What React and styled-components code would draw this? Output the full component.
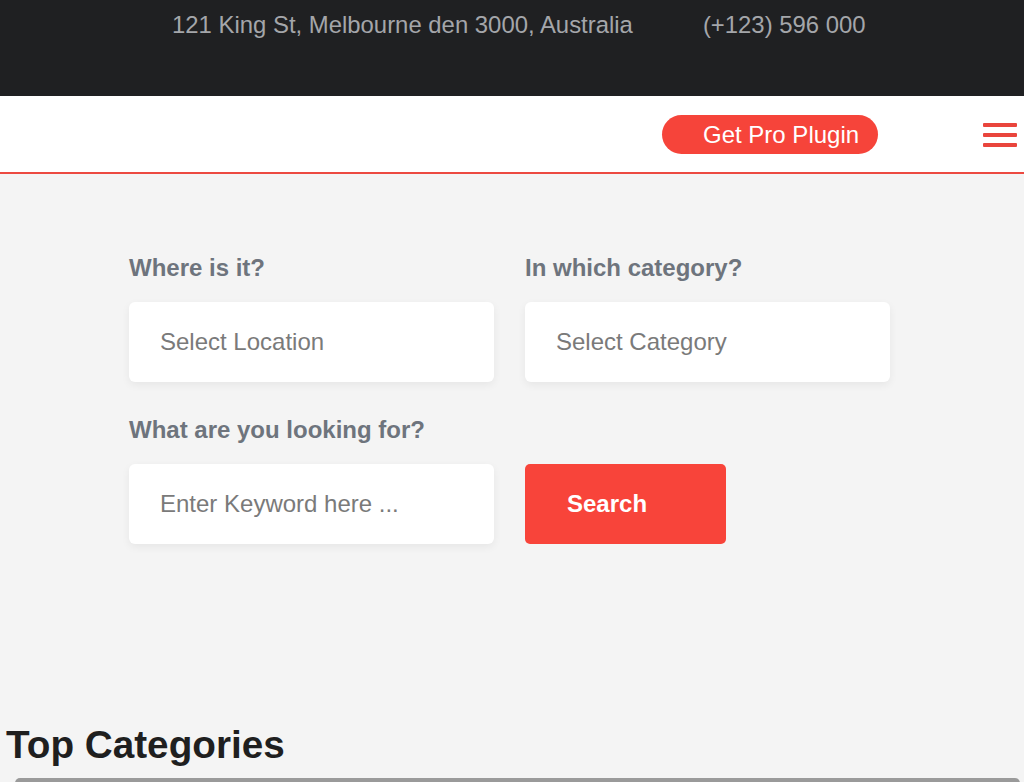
import React from "react";
import styled, { createGlobalStyle } from "styled-components";

const Global = createGlobalStyle`
  html, body { margin: 0; padding: 0; }
  body {
    background: #f4f4f4;
    font-family: "Liberation Sans", Arial, sans-serif;
    overflow: hidden;
  }
  * { box-sizing: border-box; }
`;

const Page = styled.div`
  width: 1024px;
  height: 782px;
  overflow: hidden;
  background: #f4f4f4;
  display: flex;
  flex-direction: column;
`;

const TopBar = styled.div`
  flex-shrink: 0;
  height: 96px;
  background: #1f2022;
  display: flex;
  align-items: flex-start;
  gap: 70px;
  padding: 11px 0 0 172px;
  color: #a4a6aa;
  font-size: 23.9px;
  line-height: 28px;
`;

const Header = styled.header`
  flex-shrink: 0;
  height: 78px;
  background: #fff;
  border-bottom: 2px solid #ec4a41;
  display: flex;
  align-items: flex-start;
  justify-content: flex-end;
  padding: 19px 7px 0 0;
`;

const ProButton = styled.button`
  height: 39px;
  width: 216px;
  border: none;
  border-radius: 20px;
  background: #f6443a;
  color: #fff;
  font-family: "Liberation Sans", Arial, sans-serif;
  font-size: 24px;
  line-height: 39px;
  text-align: left;
  padding: 0 0 0 41px;
  cursor: pointer;
`;

const Burger = styled.div`
  width: 34px;
  margin: 8px 0 0 105px;
  display: flex;
  flex-direction: column;
  gap: 6px;
`;

const BurgerBar = styled.span`
  display: block;
  height: 4px;
  background: #e9453d;
  border-radius: 1px;
`;

const Main = styled.main`
  flex: 1 0 auto;
  padding: 80px 0 0 129px;
`;

const FormGrid = styled.div`
  display: grid;
  grid-template-columns: 365px 365px;
  column-gap: 31px;
  row-gap: 34px;
`;

const Field = styled.div`
  display: flex;
  flex-direction: column;
`;

const Label = styled.label`
  font-size: 24px;
  font-weight: bold;
  line-height: 28px;
  color: #6e747d;
  margin-bottom: 20px;
  height: 28px;
`;

const Box = styled.div`
  height: 80px;
  background: #fff;
  border-radius: 6px;
  box-shadow: 0 3px 8px rgba(0, 0, 0, 0.06);
  display: flex;
  align-items: center;
  padding-left: 31px;
  font-size: 24px;
  color: #7a7a7a;
`;

const SearchButton = styled.button`
  width: 201px;
  height: 80px;
  border: none;
  border-radius: 5px;
  background: #f8443a;
  color: #fff;
  font-family: "Liberation Sans", Arial, sans-serif;
  font-size: 24px;
  font-weight: bold;
  text-align: left;
  padding: 0 0 0 42px;
  cursor: pointer;
`;

const Spacer = styled.div`
  height: 28px;
  margin-bottom: 20px;
`;

const Heading = styled.h2`
  margin: 179px 0 0 -123px;
  font-size: 38.7px;
  line-height: 44px;
  font-weight: bold;
  color: #1f1f1f;
`;

const Rail = styled.div`
  margin: 11px 4px 0 -114px;
  height: 10px;
  background: #9a9a9a;
  border-radius: 5px 5px 0 0;
`;

export default function App() {
  return (
    <>
      <Global />
      <Page>
        <TopBar>
          <span>121 King St, Melbourne den 3000, Australia</span>
          <span>(+123) 596 000</span>
        </TopBar>
        <Header>
          <ProButton>Get Pro Plugin</ProButton>
          <Burger>
            <BurgerBar />
            <BurgerBar />
            <BurgerBar />
          </Burger>
        </Header>
        <Main>
          <FormGrid>
            <Field>
              <Label>Where is it?</Label>
              <Box>Select Location</Box>
            </Field>
            <Field>
              <Label>In which category?</Label>
              <Box>Select Category</Box>
            </Field>
            <Field>
              <Label>What are you looking for?</Label>
              <Box>Enter Keyword here ...</Box>
            </Field>
            <Field>
              <Spacer />
              <SearchButton>Search</SearchButton>
            </Field>
          </FormGrid>
          <Heading>Top Categories</Heading>
          <Rail />
        </Main>
      </Page>
    </>
  );
}
